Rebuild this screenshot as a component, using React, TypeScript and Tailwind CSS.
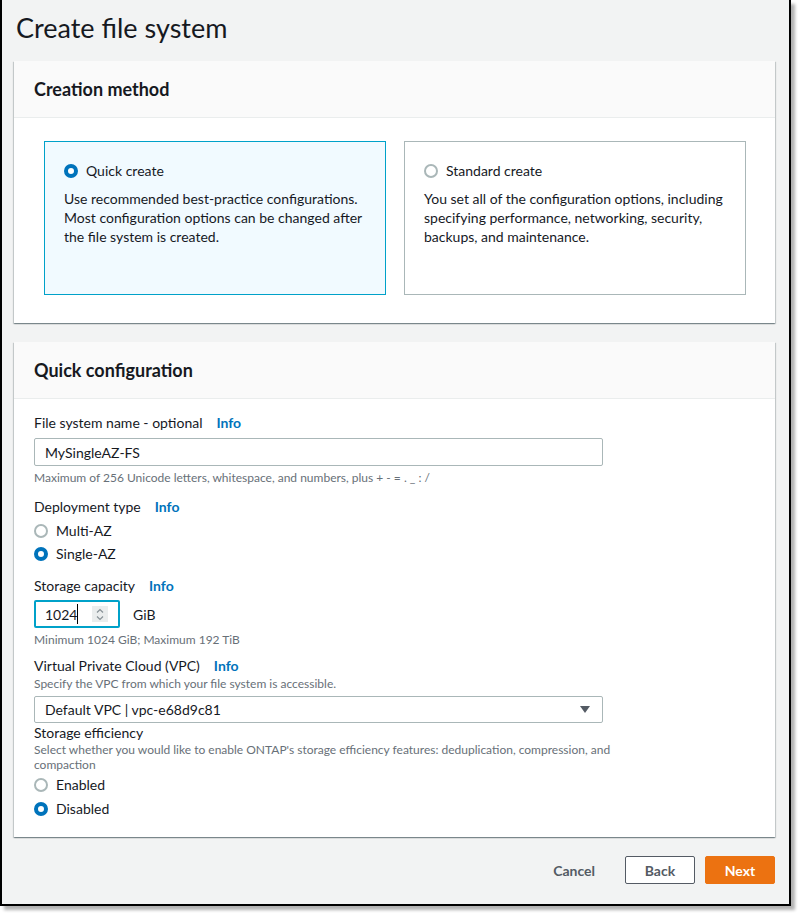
import type { ReactNode } from 'react';

function Radio({ checked }: { checked: boolean }) {
  return checked ? (
    <span className="inline-block w-[14px] h-[14px] rounded-full border-[4px] border-[#0073bb] bg-white flex-shrink-0" />
  ) : (
    <span className="inline-block w-[14px] h-[14px] rounded-full border-[2px] border-[#aab7b8] bg-white flex-shrink-0" />
  );
}

function RadioRow({ checked, label, className }: { checked: boolean; label: string; className?: string }) {
  return (
    <div className={`flex items-center h-[20px] ${className ?? ''}`}>
      <div className="w-[22px] flex justify-start">
        <Radio checked={checked} />
      </div>
      <span className="text-[14px] leading-[20px] text-[#16191f]">{label}</span>
    </div>
  );
}

function Label({ children, info, className }: { children: ReactNode; info?: boolean; className?: string }) {
  return (
    <div className={`flex items-center h-[20px] text-[14px] leading-[20px] text-[#16191f] ${className ?? ''}`}>
      <span>{children}</span>
      {info && <span className="ml-[14px] font-bold text-[#0073bb]">Info</span>}
    </div>
  );
}

function Hint({ children, className }: { children: ReactNode; className?: string }) {
  return <div className={`text-[12px] leading-[16px] text-[#687078] ${className ?? ''}`}>{children}</div>;
}

function CardHeader({ title }: { title: string }) {
  return (
    <div className="h-[57px] bg-[#fafafa] border-b border-[#eaeded] px-[20px] flex items-center">
      <h2 className="text-[18px] font-bold text-[#16191f]">{title}</h2>
    </div>
  );
}

const cardShadow =
  'shadow-[0_1px_1px_0_rgba(0,28,36,0.3),1px_1px_1px_0_rgba(0,28,36,0.15),-1px_1px_1px_0_rgba(0,28,36,0.15)]';

export default function App() {
  return (
    <div className="w-[800px] h-[914px] bg-white font-['Lato',sans-serif]">
      <div className="w-[791px] h-[906px] border-x-2 border-b-2 border-black bg-[#f2f3f3] shadow-[4px_4px_3px_rgba(0,0,0,0.3)] flex flex-col">
        {/* Page title */}
        <div className="h-[61px] pl-[14px] pt-[10px]">
          <h1 className="text-[27px] leading-[36px] text-[#16191f]">Create file system</h1>
        </div>

        {/* Creation method */}
        <div className={`ml-[12px] w-[761px] bg-white ${cardShadow}`}>
          <CardHeader title="Creation method" />
          <div className="pt-[23px] pb-[28px] pl-[30px] pr-[29px] grid grid-cols-2 gap-[18px]">
            <div className="h-[154px] border border-[#00a1c9] bg-[#f1faff] px-[19px] pt-[19px]">
              <RadioRow checked label="Quick create" />
              <p className="mt-[8px] text-[14px] leading-[19px] text-[#16191f]">
                Use recommended best-practice configurations. Most configuration options can be changed after
                the file system is created.
              </p>
            </div>
            <div className="h-[154px] border border-[#aab7b8] bg-white px-[19px] pt-[19px]">
              <RadioRow checked={false} label="Standard create" />
              <p className="mt-[8px] text-[14px] leading-[19px] text-[#16191f]">
                You set all of the configuration options, including specifying performance, networking, security,
                backups, and maintenance.
              </p>
            </div>
          </div>
        </div>

        {/* Quick configuration */}
        <div className={`mt-[19px] ml-[12px] w-[761px] bg-white ${cardShadow}`}>
          <CardHeader title="Quick configuration" />
          <div className="px-[20px] pt-[14px] pb-[18px]">
            <Label info>File system name - optional</Label>
            <div className="mt-[5px] w-[569px] h-[28px] border border-[#aab7b8] rounded-[2px] px-[10px] flex items-center text-[14px] text-[#16191f]">
              MySingleAZ-FS
            </div>
            <Hint className="mt-[4px]">Maximum of 256 Unicode letters, whitespace, and numbers, plus + - = . _ : /</Hint>

            <Label info className="mt-[11px]">
              Deployment type
            </Label>
            <RadioRow checked={false} label="Multi-AZ" className="mt-[4px]" />
            <RadioRow checked label="Single-AZ" className="mt-[3px]" />

            <Label info className="mt-[12px]">
              Storage capacity
            </Label>
            <div className="mt-[4px] flex items-center">
              <div className="w-[86px] h-[28px] border-2 border-[#00a1c9] rounded-[2px] pl-[9px] pr-[10px] flex items-center text-[14px] text-[#16191f]">
                <span>1024</span>
                <span className="w-px h-[20px] bg-black" />
                <div className="ml-auto w-[16px] h-[16px] bg-[#eaeded] flex flex-col items-center justify-center">
                  <svg width="8" height="13" viewBox="0 0 8 13" fill="none" stroke="#879196" strokeWidth="1.2">
                    <path d="M1 4.5 L4 1.5 L7 4.5" />
                    <path d="M1 8.5 L4 11.5 L7 8.5" />
                  </svg>
                </div>
              </div>
              <span className="ml-[13px] text-[14px] text-[#16191f]">GiB</span>
            </div>
            <Hint className="mt-[4px]">Minimum 1024 GiB; Maximum 192 TiB</Hint>

            <Label info className="mt-[8px]">
              Virtual Private Cloud (VPC)
            </Label>
            <Hint>Specify the VPC from which your file system is accessible.</Hint>
            <div className="mt-[4px] w-[569px] h-[27px] border border-[#aab7b8] rounded-[2px] pl-[10px] pr-[12px] flex items-center justify-between text-[14px] text-[#16191f]">
              <span>Default VPC | vpc-e68d9c81</span>
              <svg width="10" height="7" viewBox="0 0 10 7">
                <path d="M0 0 H10 L5 7 Z" fill="#545b64" />
              </svg>
            </div>

            <Label>Storage efficiency</Label>
            <p className="mt-[-1px] w-[600px] text-[12px] leading-[15px] text-[#687078]">
              Select whether you would like to enable ONTAP's storage efficiency features: deduplication, compression,
              and compaction
            </p>
            <RadioRow checked={false} label="Enabled" className="mt-[3px]" />
            <RadioRow checked label="Disabled" className="mt-[4px]" />
          </div>
        </div>

        {/* Footer actions */}
        <div className="mt-[19px] ml-[12px] w-[761px] flex justify-end items-center gap-[10px]">
          <button type="button" className="h-[28px] px-[20px] text-[14px] font-bold text-[#545b64]">
            Cancel
          </button>
          <button
            type="button"
            className="w-[70px] h-[28px] border border-[#545b64] rounded-[2px] bg-white text-[14px] font-bold text-[#545b64]"
          >
            Back
          </button>
          <button
            type="button"
            className="w-[70px] h-[28px] border border-[#ec7211] rounded-[2px] bg-[#ec7211] text-[14px] font-bold text-white"
          >
            Next
          </button>
        </div>
      </div>
    </div>
  );
}
